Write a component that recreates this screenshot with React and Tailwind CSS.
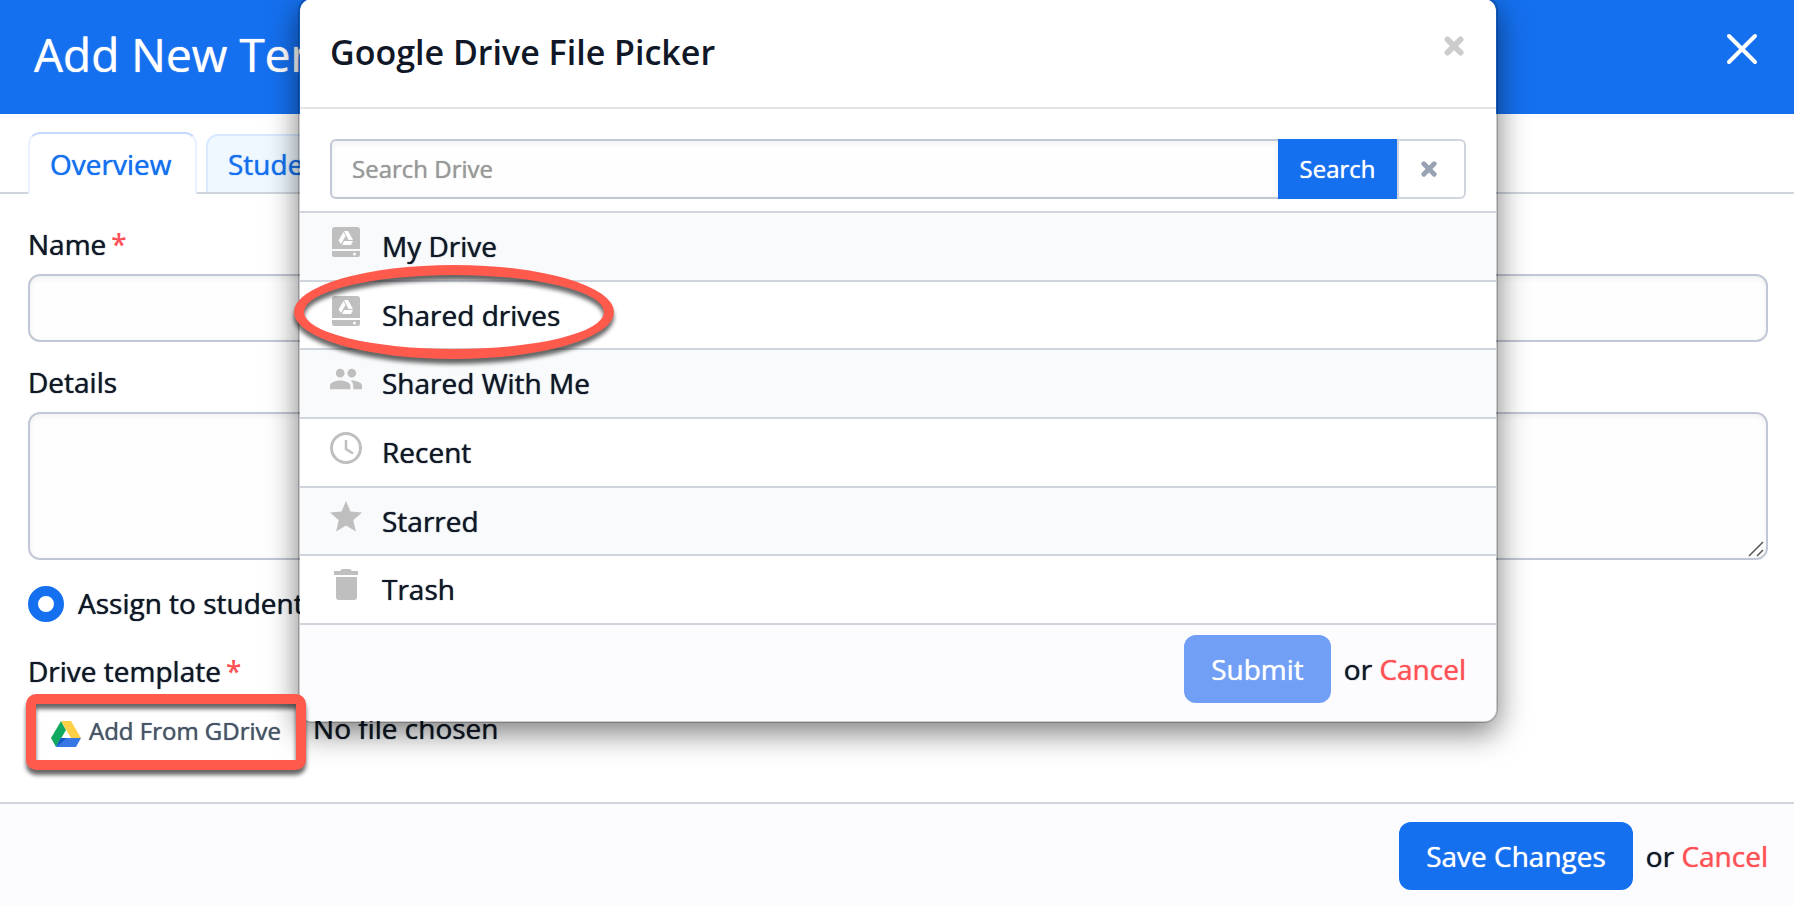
import { useState } from "react";

const TABS = ["Overview", "Students"];

const LOCATIONS = [
  { key: "my-drive", label: "My Drive", Icon: DriveIcon },
  { key: "shared-drives", label: "Shared drives", Icon: DriveIcon, marked: true },
  { key: "shared-with-me", label: "Shared With Me", Icon: PeopleIcon },
  { key: "recent", label: "Recent", Icon: ClockIcon },
  { key: "starred", label: "Starred", Icon: StarIcon },
  { key: "trash", label: "Trash", Icon: TrashIcon },
];

export default function App() {
  return (
    <div className="relative flex min-h-screen flex-col overflow-hidden bg-white font-['Open_Sans',sans-serif] text-[28px] leading-9 font-medium text-[#101828] [text-shadow:0_0_1px_currentColor] [&_button]:[text-shadow:0_0_1px_currentColor]">
      <header className="flex h-[114px] items-center justify-between bg-[#1570ef] pr-9 pl-[34px] text-white">
        <h1 className="pb-[6px] text-[46px] leading-[60px] [text-shadow:0_0_1px_currentColor]">Add New Template</h1>
        <button type="button" aria-label="Close" className="mb-4">
          <svg viewBox="0 0 32 32" className="size-8" fill="none" stroke="currentColor" strokeWidth="4" strokeLinecap="round">
            <path d="M3 3l26 26M29 3L3 29" />
          </svg>
        </button>
      </header>
      <Tabs />
      <TemplateForm />
      <footer className="flex flex-1 items-start justify-end border-t-2 border-[#d0d5dd] bg-[#fcfcff] px-[26px] pt-[18px]">
        <FormActions label="Save Changes" />
      </footer>
      <FilePicker />
    </div>
  );
}

function Tabs() {
  const [active, setActive] = useState("Overview");
  return (
    <nav className="flex h-20 items-end gap-[9px] border-b-2 border-[#d0d5dd] px-7">
      {TABS.map((tab) => (
        <button
          key={tab}
          type="button"
          onClick={() => setActive(tab)}
          className={`min-w-[169px] rounded-t-xl border-2 border-b-0 px-5 text-left text-[#1570ef] ${
            tab === active
              ? "-mb-[2px] h-[62px] border-x-[#eaf2ff] border-t-[#c5daff] bg-white"
              : "h-[58px] border-[#d9eaff] bg-[#eff8ff]"
          }`}
        >
          {tab}
        </button>
      ))}
    </nav>
  );
}

function TemplateForm() {
  const field =
    "block w-full rounded-xl border-2 border-[#c1c7d4] bg-[#fefefe] px-5 shadow-[inset_0_2px_6px_rgba(0,0,0,0.06)]";
  return (
    <form className="flex flex-col pt-8 pr-[26px] pb-[31px] pl-7">
      <label htmlFor="name">
        Name
        <Required />
      </label>
      <input id="name" type="text" className={`${field} mt-3 h-[68px]`} />
      <label htmlFor="details" className="mt-[22px]">
        Details
      </label>
      <div className="relative mt-3">
        <textarea id="details" className={`${field} h-[148px] resize-none`} />
        <svg
          viewBox="0 0 16 16"
          className="pointer-events-none absolute right-1 bottom-[3px] size-4"
          fill="none"
          stroke="#555"
          strokeWidth="1.500"
        >
          <path d="M1 15L15 1M9 15l6-6" />
        </svg>
      </div>
      <label className="mt-[26px] flex items-center gap-[14px]">
        <input
          type="radio"
          name="assign"
          defaultChecked
          className="size-9 appearance-none rounded-full border-[10px] border-[#1570ef] bg-white"
        />
        <span className="-mt-[2px]">Assign to students</span>
      </label>
      <label htmlFor="gdrive" className="mt-[31px]">
        Drive template
        <Required />
      </label>
      <div className="mt-[2px] flex items-center gap-[9px]">
        <div className="relative flex h-20 items-center">
          <button
            id="gdrive"
            type="button"
            className="flex items-center gap-2 px-[23px] text-[24px] text-[#475467]"
          >
            <GoogleDriveLogo />
            Add From GDrive
          </button>
          <span className="pointer-events-none absolute -inset-x-[2px] top-[3px] z-20 h-[76px] rounded-[10px] border-10 border-[#ff5a4c] drop-shadow-[0_5px_2px_rgba(0,0,0,0.6)]" />
        </div>
        <span className="-mt-[6px]">No file chosen</span>
      </div>
    </form>
  );
}

function FilePicker() {
  return (
    <div className="absolute inset-x-0 -top-[3px] z-10 flex justify-center pl-[2px]">
      <section
        role="dialog"
        aria-label="Google Drive File Picker"
        className="w-[1200px] rounded-[14px] border-2 border-black/20 bg-white bg-clip-padding shadow-[0_10px_30px_rgba(0,0,0,0.5)]"
      >
        <div className="flex h-[110px] items-start justify-between border-b-2 border-[#e5e5e5] pt-[31px] pr-8 pl-[30px]">
          <h2 className="text-[34px] leading-11 font-semibold [text-shadow:none]">Google Drive File Picker</h2>
          <button type="button" aria-label="Close picker" className="mt-[6px]">
            <TimesIcon className="size-5 text-[#ccc]" />
          </button>
        </div>

        <form className="flex px-[30px] pt-[30px] pb-3">
          <input
            type="search"
            aria-label="Search Drive"
            placeholder="Search Drive"
            className="h-[60px] min-w-0 flex-1 rounded-l-md border-2 border-r-0 border-[#c1c7d4] bg-[#fefefe] px-5 pb-[2px] text-[24px] shadow-[inset_0_2px_6px_rgba(0,0,0,0.06)] [text-shadow:0_0_1px_#999] placeholder:text-[#999]"
          />
          <button type="button" className="w-[119px] bg-[#1570ef] pb-px text-[24px] text-white">
            Search
          </button>
          <button
            type="button"
            aria-label="Clear search"
            className="flex w-[69px] items-center rounded-r-md border-2 border-[#d0d5dd] pl-[22px]"
          >
            <TimesIcon className="size-4 text-[#98a2b3]" />
          </button>
        </form>

        <ul className="grid h-[412px] auto-rows-fr">
          {LOCATIONS.map(({ key, label, Icon, marked }) => (
            <li
              key={key}
              className={`relative flex border-t-2 border-[#d0d5dd] odd:bg-[#f9fafb] ${marked ? "z-10" : ""}`}
            >
              <button type="button" className="flex flex-1 items-start gap-5 px-[30px] text-left">
                <Icon className="mt-[13px] size-8 text-[#bfbfbf]" />
                <span className="mt-[15px]">{label}</span>
              </button>
              {marked && (
                <span className="pointer-events-none absolute -top-[17px] -left-[6px] h-[94px] w-80 rounded-[50%] border-10 border-[#ff5a4c] drop-shadow-[0_5px_2px_rgba(0,0,0,0.6)]" />
              )}
            </li>
          ))}
        </ul>

        <div className="flex h-[98px] items-start justify-end rounded-b-xl border-t-2 border-[#d0d5dd] bg-[#fcfcff] px-[30px] pt-[10px]">
          <FormActions label="Submit" disabled />
        </div>
      </section>
    </div>
  );
}

function FormActions({ label, disabled }) {
  return (
    <div className="flex items-center">
      <button
        type="button"
        disabled={disabled}
        className={`mr-[13px] h-[68px] rounded-xl px-[27px] text-white ${
          disabled ? "bg-[#709ff5]" : "bg-[#1570ef]"
        }`}
      >
        {label}
      </button>
      <span>
        or{" "}
        <a href="#cancel" className="text-[#ff5256] [text-shadow:0_0_1px_currentColor]">
          Cancel
        </a>
      </span>
    </div>
  );
}

function Required() {
  return <span className="ml-[5px] font-semibold text-[#ff5256] [text-shadow:none]">*</span>;
}

function TimesIcon({ className }) {
  return (
    <svg viewBox="0 0 20 20" className={className} fill="none" stroke="currentColor" strokeWidth="6" strokeLinecap="round">
      <path d="M3.500 3.500l13 13M16.500 3.500l-13 13" />
    </svg>
  );
}

function GoogleDriveLogo() {
  return (
    <svg viewBox="0 0 30 26" className="mt-[5px] h-[26px] w-[30px]">
      <path d="M10 0L0 17l5 9L15 9z" fill="#11a861" />
      <path d="M10 0h10l10 17H20z" fill="#ffcf48" />
      <path d="M10 17h20l-5 9H5z" fill="#3777e3" />
      <path d="M10 17h5.500L5 26z" fill="#1256c4" />
    </svg>
  );
}

function DriveIcon({ className }) {
  return (
    <svg viewBox="0 0 32 32" className={className} fill="currentColor">
      <path d="M5 1h22a3 3 0 0 1 3 3v19H2V4a3 3 0 0 1 3-3z" />
      <path fillRule="evenodd" d="M2 25h28v4a2 2 0 0 1-2 2H4a2 2 0 0 1-2-2zm22.500 1.500a1.500 1.500 0 1 0 0 3 1.500 1.500 0 0 0 0-3z" />
      <g fill="#fff">
        <path d="M14 5h4l5 9h-4.500z" />
        <path d="M13.500 6l2 4-4.500 8-2.500-3.500z" />
        <path d="M14 15h9l-2 4h-9z" />
      </g>
    </svg>
  );
}

function PeopleIcon({ className }) {
  return (
    <svg viewBox="1 1 22 22" className={className} fill="currentColor">
      <path d="M16 11c1.660 0 2.990-1.340 2.990-3S17.660 5 16 5c-1.660 0-3 1.340-3 3s1.340 3 3 3zm-8 0c1.660 0 2.990-1.340 2.990-3S9.660 5 8 5C6.340 5 5 6.340 5 8s1.340 3 3 3zm0 2c-2.330 0-7 1.170-7 3.500V19h14v-2.500c0-2.330-4.670-3.500-7-3.500zm8 0c-.290 0-.620.020-.970.050 1.160.840 1.970 1.970 1.970 3.450V19h6v-2.500c0-2.330-4.670-3.500-7-3.500z" />
    </svg>
  );
}

function ClockIcon({ className }) {
  return (
    <svg viewBox="0 0 32 32" className={className} fill="none" stroke="currentColor">
      <circle cx="16" cy="16" r="14.500" strokeWidth="3" />
      <path d="M16 8v9l7 4.500" strokeWidth="2.500" />
    </svg>
  );
}

function StarIcon({ className }) {
  return (
    <svg viewBox="2 2 20 20" className={className} fill="currentColor">
      <path d="M12 17.270L18.180 21l-1.640-7.030L22 9.240l-7.190-.610L12 2 9.190 8.630 2 9.240l5.460 4.730L5.820 21z" />
    </svg>
  );
}

function TrashIcon({ className }) {
  return (
    <svg viewBox="0 0 32 32" className={className} fill="currentColor">
      <path d="M6 8h21v20a3 3 0 0 1-3 3H9a3 3 0 0 1-3-3zM4 2h6l2-2h8l2 2h6v4H4z" />
    </svg>
  );
}
